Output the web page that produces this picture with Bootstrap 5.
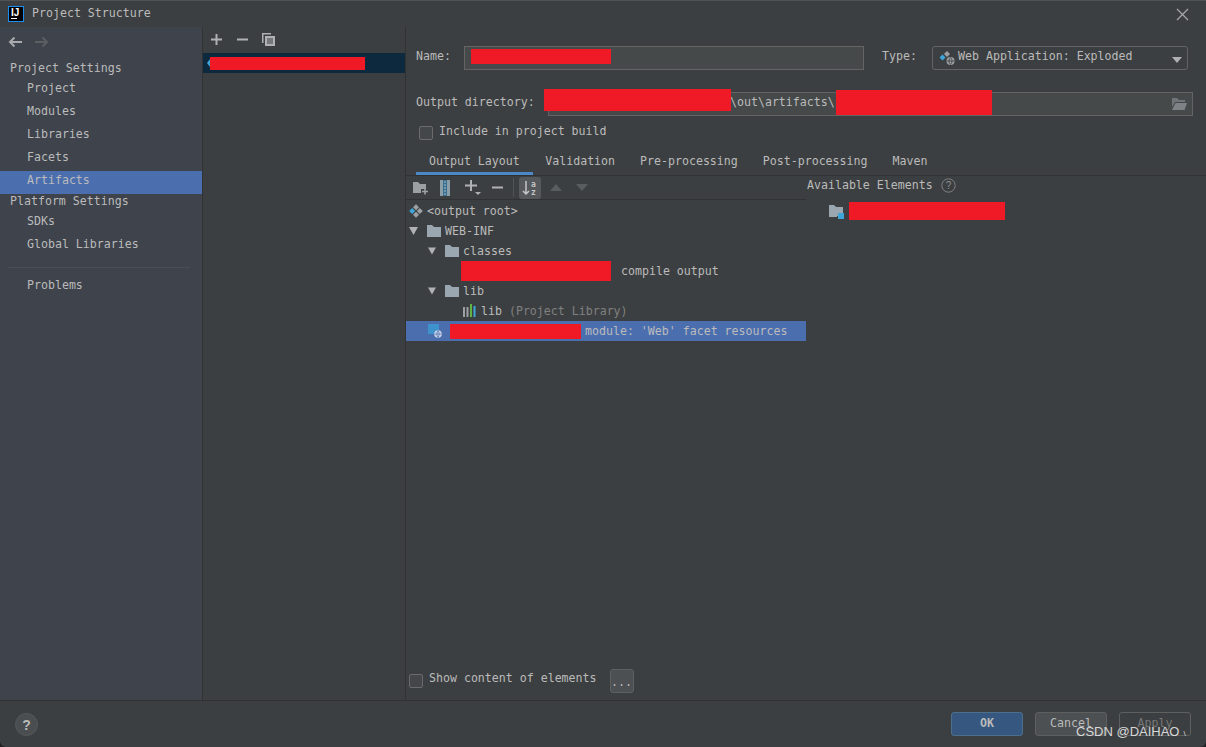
<!DOCTYPE html>
<html lang="en">
<head>
<meta charset="utf-8">
<title>Project Structure</title>
<link href="https://cdn.jsdelivr.net/npm/bootstrap@5.3.0/dist/css/bootstrap.min.css" rel="stylesheet">
<style>
html,body{height:100%;margin:0;background:#1f2022;}
body{font-family:"DejaVu Sans Mono","Liberation Mono",monospace;font-size:11.6px;line-height:1;color:#bbbbbb;overflow:hidden;}
svg{display:block;flex:none;}
.ij-window{width:1206px;height:747px;background:#3c3f41;border-top:1px solid #505354;border-radius:0 0 6px 6px;overflow:hidden;position:relative;}
.ij-title{height:26px;padding-left:8px;gap:8px;}
.ij-logo{width:16px;height:16px;background:#000;border:1px solid #1b8cf2;color:#fff;font-size:10px;font-weight:700;font-family:"Liberation Sans",sans-serif;padding:2px 0 0 2px;line-height:8px;position:relative;}
.ij-logo::after{content:"";position:absolute;left:2px;bottom:2px;width:6px;height:1px;background:#fff;}
.ij-close{margin-left:auto;margin-right:17px;}
.ij-main{height:674px;border-bottom:1px solid #323232;}
.ij-side{width:203px;background:#3e434c;border-right:1px solid #323232;}
.ij-nav{height:31px;padding:9px 0 0 8px;gap:13px;}
.ij-head{padding-left:10px;height:21px;color:#bbb;}
.ij-head-b{height:18px;align-items:flex-start;padding-top:2px;}
.ij-item{height:23px;padding-left:27px;padding-bottom:4px;}
.ij-sel{background:#4b6eaf;}
.ij-rule{height:1px;background:#4a4d52;margin:9px 12px 8px 8px;}
.ij-mid{width:203px;border-right:1px solid #323232;}
.ij-midbar{height:26px;padding-left:7px;padding-bottom:2px;gap:13px;}
.ij-midrow{height:20px;background:#0d293e;padding-left:4px;position:relative;}
.ij-red{background:#ef1a26;}
.ij-r1{width:155px;height:13px;}
.ij-right{width:800px;}
.ij-form{padding:19px 13px 0 10px;height:122px;}
.ij-label{width:48px;padding-bottom:2px;}
.ij-input{height:24px;background:#45494a;border:1px solid #646464;border-radius:0;color:#bbb;font-size:inherit;padding:0;box-shadow:none;}
.ij-name{width:400px;padding:2px 0 0 6px;align-items:flex-start;}
.ij-r2{width:140px;height:15px;}
.ij-type-l{width:50px;margin-left:18px;padding-bottom:2px;}
.ij-select{width:256px;height:24px;border:1px solid #646464;border-radius:3px;padding:0 5px 0 6px;gap:3px;}
.ij-seltext{padding-bottom:2px;}
.ij-caret{width:0;height:0;border:5px solid transparent;border-top:6px solid #aeb0b2;border-bottom:0;margin-left:auto;margin-top:3px;}
.ij-dirrow{margin-top:22px;}
.ij-dirlabel{width:132px;padding-bottom:2px;}
.ij-dir{width:645px;position:relative;padding:0 5px 0 181px;}
.ij-dirtext{padding-bottom:2px;}
.ij-over1{position:absolute;left:-5px;top:-4px;width:187px;height:22px;}
.ij-over2{position:absolute;left:287px;top:-3px;width:156px;height:25px;}
.ij-folderbtn{margin-left:auto;}
.ij-checkrow{margin-top:9px;height:16px;padding-left:3px;gap:6px;}
.ij-checktext{padding-bottom:3px;}
.ij-check{width:14px;height:14px;border:1px solid #6b6b6b;border-radius:2px;background:#43474a;flex:none;}
.ij-tabs{height:27px;border-bottom:1px solid #323232;padding-left:10px;}
.ij-tab{padding:0 12.5px;height:26px;border:0;background:transparent;color:#bbb;font:inherit;border-bottom:3px solid transparent;padding-top:3px;}
.ij-tab-on{padding:3px 13px 0;border-bottom-color:#4a88c7;}
.ij-split{height:525px;}
.ij-left{width:400px;}
.ij-bar{height:24px;border-bottom:1px solid #323232;padding-left:7px;}
.ij-sortbtn{width:22px;height:22px;background:#55595c;border-radius:3px;}
.ij-sep{width:1px;height:19px;background:#515355;}
.ij-tree{margin-top:1px;}
.ij-row{height:20px;white-space:pre;}
.ij-rowtext{padding-top:2px;}
.ij-pad0{padding-left:3px;}
.ij-dim{color:#808080;}
.ij-bot{height:32px;padding:0 0 8px 3px;}
.ij-bottext{padding-bottom:4px;}
.ij-dots{width:24px;height:24px;background:#4c5052;border:1px solid #5e6060;border-radius:3px;color:#bbb;padding:4px 0 0;font:inherit;margin-left:13px;}
.ij-av{padding:2px 0 0 1px;}
.ij-avrow{height:19px;padding-left:22px;margin-top:8px;gap:5px;}
.ij-avicon{margin-top:3px;}
.ij-r3{width:156px;height:18px;}
.ij-foot{height:46px;padding:11px 15px 0 15px;}
.ij-help{width:23px;height:23px;margin-top:1px;border-radius:50%;background:#4b4e50;border:1px solid #55585a;color:#bbb;font:700 14px "Liberation Sans",sans-serif;padding:0;}
.ij-btn{width:72px;height:24px;border-radius:3px;padding:0;font:inherit;line-height:1;color:#bbb;}
.ij-ok{background:#365880;border:1px solid #4c708c;font-weight:700;margin-left:auto;}
.ij-cancel{background:#4c5052;border:1px solid #5e6060;margin-left:12px;}
.ij-apply{background:transparent;border:1px solid #5e6060;color:#777;margin-left:12px;}
.ij-mark{position:absolute;left:1076px;top:723px;font:13px/16px "Liberation Sans",sans-serif;color:#d8d8d8;white-space:pre;}
.ij-mark-end{font-size:8px;margin-left:4px;}
</style>
</head>
<body>
<div class="ij-window">
  <div class="ij-title d-flex align-items-center">
    <div class="ij-logo">IJ</div>
    <span>Project Structure</span>
    <svg class="ij-close" width="13" height="13" viewBox="0 0 13 13"><path d="M1 1l11 11M12 1L1 12" stroke="#a8a8a8" stroke-width="1.2"/></svg>
  </div>
  <div class="ij-main d-flex">
    <div class="ij-side flex-none">
      <div class="ij-nav d-flex">
        <svg width="14" height="12" viewBox="0 0 14 12"><path d="M14 6H2M6.500 1.500L2 6l4.500 4.500" fill="none" stroke="#a9abad" stroke-width="2"/></svg>
        <svg width="14" height="12" viewBox="0 0 14 12"><path d="M0 6h12M7.500 1.500L12 6l-4.500 4.500" fill="none" stroke="#5c5f62" stroke-width="2"/></svg>
      </div>
      <div class="ij-head d-flex align-items-center">Project Settings</div>
      <div class="ij-item d-flex align-items-center">Project</div>
      <div class="ij-item d-flex align-items-center">Modules</div>
      <div class="ij-item d-flex align-items-center">Libraries</div>
      <div class="ij-item d-flex align-items-center">Facets</div>
      <div class="ij-item ij-sel d-flex align-items-center">Artifacts</div>
      <div class="ij-head ij-head-b d-flex">Platform Settings</div>
      <div class="ij-item d-flex align-items-center">SDKs</div>
      <div class="ij-item d-flex align-items-center">Global Libraries</div>
      <div class="ij-rule"></div>
      <div class="ij-item d-flex align-items-center">Problems</div>
    </div>
    <div class="ij-mid flex-none">
      <div class="ij-midbar d-flex align-items-center">
        <svg width="13" height="13" viewBox="0 0 13 13"><path d="M6.500 1v11M1 6.500h11" stroke="#afb1b3" stroke-width="2"/></svg>
        <svg width="13" height="13" viewBox="0 0 13 13"><path d="M1 6.500h11" stroke="#afb1b3" stroke-width="2"/></svg>
        <svg width="13" height="13" viewBox="0 0 13 13"><path d="M0 0h9v1.500H1.500V10H0z" fill="#afb1b3"/><path d="M3 3h10v10H3z" fill="#afb1b3"/><path d="M5 6h6M5 8h6M5 10h6" stroke="#3c3f41"/></svg>
      </div>
      <div class="ij-midrow d-flex align-items-center">
        <svg width="3" height="8" viewBox="0 0 3 8"><path d="M3 0v8L0 4z" fill="#3ea6d8"/></svg>
        <div class="ij-red ij-r1"></div>
      </div>
    </div>
    <div class="ij-right flex-none">
      <div class="ij-form">
        <div class="d-flex align-items-center">
          <span class="ij-label">Name:</span>
          <div class="ij-input ij-name d-flex"><div class="ij-red ij-r2"></div></div>
          <span class="ij-type-l">Type:</span>
          <div class="ij-select d-flex align-items-center">
            <svg width="16" height="16" viewBox="0 0 16 16"><path d="M3.500 4.500L6.500 7.500l-3 3-3-3z" fill="#3ea6d8"/><path d="M8 1l3 3-3 3-3-3z" fill="#9da0a3"/><circle cx="11.500" cy="11" r="4" fill="#9da0a3"/><path d="M8 11h7M11.500 7.500c-2 2-2 5 0 7c2-2 2-5 0-7" fill="none" stroke="#3c3f41" stroke-width=".8"/></svg>
            <span class="ij-seltext">Web Application: Exploded</span>
            <span class="ij-caret"></span>
          </div>
        </div>
        <div class="ij-dirrow d-flex align-items-center">
          <span class="ij-dirlabel">Output directory:</span>
          <div class="ij-input ij-dir d-flex align-items-center">
            <span class="ij-dirtext">\out\artifacts\</span>
            <div class="ij-red ij-over1"></div>
            <div class="ij-red ij-over2"></div>
            <svg class="ij-folderbtn" width="15" height="12" viewBox="0 0 15 12"><path d="M0 0h5l2 2h6v2H3L0 9z" fill="#70757a"/><path d="M3.500 5H15l-2.500 7H0z" fill="#7f8387"/></svg>
          </div>
        </div>
        <div class="ij-checkrow d-flex align-items-center">
          <div class="ij-check"></div>
          <span class="ij-checktext">Include in project build</span>
        </div>
      </div>
      <div class="ij-tabs d-flex">
        <button class="ij-tab ij-tab-on" type="button">Output Layout</button>
        <button class="ij-tab" type="button">Validation</button>
        <button class="ij-tab" type="button">Pre-processing</button>
        <button class="ij-tab" type="button">Post-processing</button>
        <button class="ij-tab" type="button">Maven</button>
      </div>
      <div class="ij-split d-flex">
        <div class="ij-left d-flex flex-column">
          <div class="ij-bar d-flex align-items-center flex-none">
            <svg width="15" height="14" viewBox="0 0 15 14"><path d="M0 1h5l2 2h6v5H8v4H0z" fill="#9da0a3"/><path d="M12 7.500v6M9 10.500h6" stroke="#9da0a3" stroke-width="1.600"/></svg>
            <svg style="margin-left:12px" width="10" height="16" viewBox="0 0 10 16"><path d="M0 0h3v16H0zM7 0h3v16H7z" fill="#8c9ea8"/><path d="M3 0h4v16H3z" fill="#3b6e8c"/><path d="M4 2h2M4 5h2M4 8h2M4 11h2M4 14h2" stroke="#9fc4d8"/></svg>
            <svg style="margin-left:15px" width="17" height="17" viewBox="0 0 17 17"><path d="M6 1v11M0 6.500h12" stroke="#afb1b3" stroke-width="2"/><path d="M10 13h6l-3 3z" fill="#afb1b3"/></svg>
            <svg style="margin-left:10px" width="11" height="13" viewBox="0 0 11 13"><path d="M0 6.500h11" stroke="#afb1b3" stroke-width="2"/></svg>
            <span class="ij-sep" style="margin-left:10px"></span>
            <div class="ij-sortbtn d-flex align-items-center justify-content-center" style="margin-left:5px">
              <svg width="16" height="16" viewBox="0 0 16 16"><path d="M4 1v13M1 11l3 3 3-3" fill="none" stroke="#c4c6c8" stroke-width="1.500"/><text x="9" y="7" font-size="8" font-family="DejaVu Sans Mono" font-weight="700" fill="#c4c6c8">a</text><text x="9" y="15" font-size="8" font-family="DejaVu Sans Mono" font-weight="700" fill="#c4c6c8">z</text></svg>
            </div>
            <svg style="margin-left:9px" width="12" height="7" viewBox="0 0 12 7"><path d="M0 7L6 0l6 7z" fill="#5a5d5f"/></svg>
            <svg style="margin-left:14px" width="12" height="7" viewBox="0 0 12 7"><path d="M0 0l6 7 6-7z" fill="#5a5d5f"/></svg>
          </div>
          <div class="ij-tree flex-grow-1">
            <div class="ij-row ij-pad0 d-flex align-items-center">
              <svg class="me-1" width="14" height="14" viewBox="0 0 14 14"><path d="M3.200 4L6.200 7l-3 3-3-3z" fill="#3ea6d8"/><path d="M10.800 4l3 3-3 3-3-3zM7 .2l3 3-3 3-3-3zM7 7.800l3 3-3 3-3-3z" fill="#9da0a3"/></svg>
              <span class="ij-rowtext">&lt;output root&gt;</span>
            </div>
            <div class="ij-row ij-pad0 d-flex align-items-center">
              <svg width="9" height="8" viewBox="0 0 9 8" style="margin-right:9px"><path d="M0 0h9L4.500 8z" fill="#afb1b3"/></svg>
              <svg width="14" height="12" viewBox="0 0 14 12" style="margin-right:4px"><path d="M0 0h5l2 2h7v10H0z" fill="#9aa7b0"/></svg>
              <span class="ij-rowtext">WEB-INF</span>
            </div>
            <div class="ij-row d-flex align-items-center" style="padding-left:22px">
              <svg width="8" height="8" viewBox="0 0 9 8" style="margin-right:9px"><path d="M0 0h9L4.500 8z" fill="#afb1b3"/></svg>
              <svg width="14" height="12" viewBox="0 0 14 12" style="margin-right:4px"><path d="M0 0h5l2 2h7v10H0z" fill="#9aa7b0"/></svg>
              <span class="ij-rowtext">classes</span>
            </div>
            <div class="ij-row d-flex align-items-center" style="padding-left:55px">
              <div class="ij-red" style="width:150px;height:20px;margin-right:10px"></div>
              <span class="ij-rowtext">compile output</span>
            </div>
            <div class="ij-row d-flex align-items-center" style="padding-left:22px">
              <svg width="8" height="8" viewBox="0 0 9 8" style="margin-right:9px"><path d="M0 0h9L4.500 8z" fill="#afb1b3"/></svg>
              <svg width="14" height="12" viewBox="0 0 14 12" style="margin-right:4px"><path d="M0 0h5l2 2h7v10H0z" fill="#9aa7b0"/></svg>
              <span class="ij-rowtext">lib</span>
            </div>
            <div class="ij-row d-flex align-items-center" style="padding-left:57px">
              <svg width="14" height="14" viewBox="0 0 14 14" style="margin-right:4px"><path d="M0 3h2v10H0zM3.500 3h2v10h-2z" fill="#9da0a3"/><path d="M7 0h2v13H7z" fill="#62b543"/><path d="M10.500 2H12.500v11h-2z" fill="#3ea6d8"/></svg>
              <span class="ij-rowtext">lib <span class="ij-dim">(Project Library)</span></span>
            </div>
            <div class="ij-row ij-sel d-flex align-items-center" style="padding-left:22px">
              <svg width="14" height="14" viewBox="0 0 14 14" style="margin-right:8px"><path d="M0 0h11v10H0z" fill="#3f93cc"/><circle cx="10" cy="10" r="3.800" fill="#c9d3e8"/><path d="M6.500 10h7M10 6.500c-1.500 2-1.500 5 0 7c1.500-2 1.500-5 0-7" fill="none" stroke="#4b6eaf" stroke-width=".7"/></svg>
              <div class="ij-red" style="width:131px;height:15px;margin-right:4px"></div>
              <span class="ij-rowtext">module: 'Web' facet resources</span>
            </div>
          </div>
          <div class="ij-bot d-flex align-items-center flex-none">
            <div class="ij-check" style="margin-right:6px"></div>
            <span class="ij-bottext">Show content of elements</span>
            <button class="ij-dots" type="button">...</button>
          </div>
        </div>
        <div class="ij-av flex-grow-1">
          <div class="d-flex align-items-center gap-2">
            <span>Available Elements</span>
            <svg width="15" height="15" viewBox="0 0 15 15"><circle cx="7.500" cy="7.500" r="6.700" fill="none" stroke="#7d7f81"/><text x="7.500" y="11" text-anchor="middle" font-size="10" font-family="Liberation Sans" fill="#8c8e90">?</text></svg>
          </div>
          <div class="ij-avrow d-flex align-items-center">
            <svg class="ij-avicon" width="15" height="14" viewBox="0 0 15 14"><path d="M0 0h5l2 2h7v9H8v1H0z" fill="#9aa7b0"/><path d="M9 8h6v6H9z" fill="#3ea6d8"/></svg>
            <div class="ij-red ij-r3"></div>
          </div>
        </div>
      </div>
    </div>
  </div>
  <div class="ij-foot d-flex align-items-start">
    <button class="ij-help" type="button">?</button>
    <button class="ij-btn ij-ok" type="button">OK</button>
    <button class="ij-btn ij-cancel" type="button">Cancel</button>
    <button class="ij-btn ij-apply" type="button">Apply</button>
  </div>
  <div class="ij-mark">CSDN @DAIHAO<span class="ij-mark-end">\</span></div>
</div>
<script src="https://cdn.jsdelivr.net/npm/bootstrap@5.3.0/dist/js/bootstrap.bundle.min.js"></script>
</body>
</html>
